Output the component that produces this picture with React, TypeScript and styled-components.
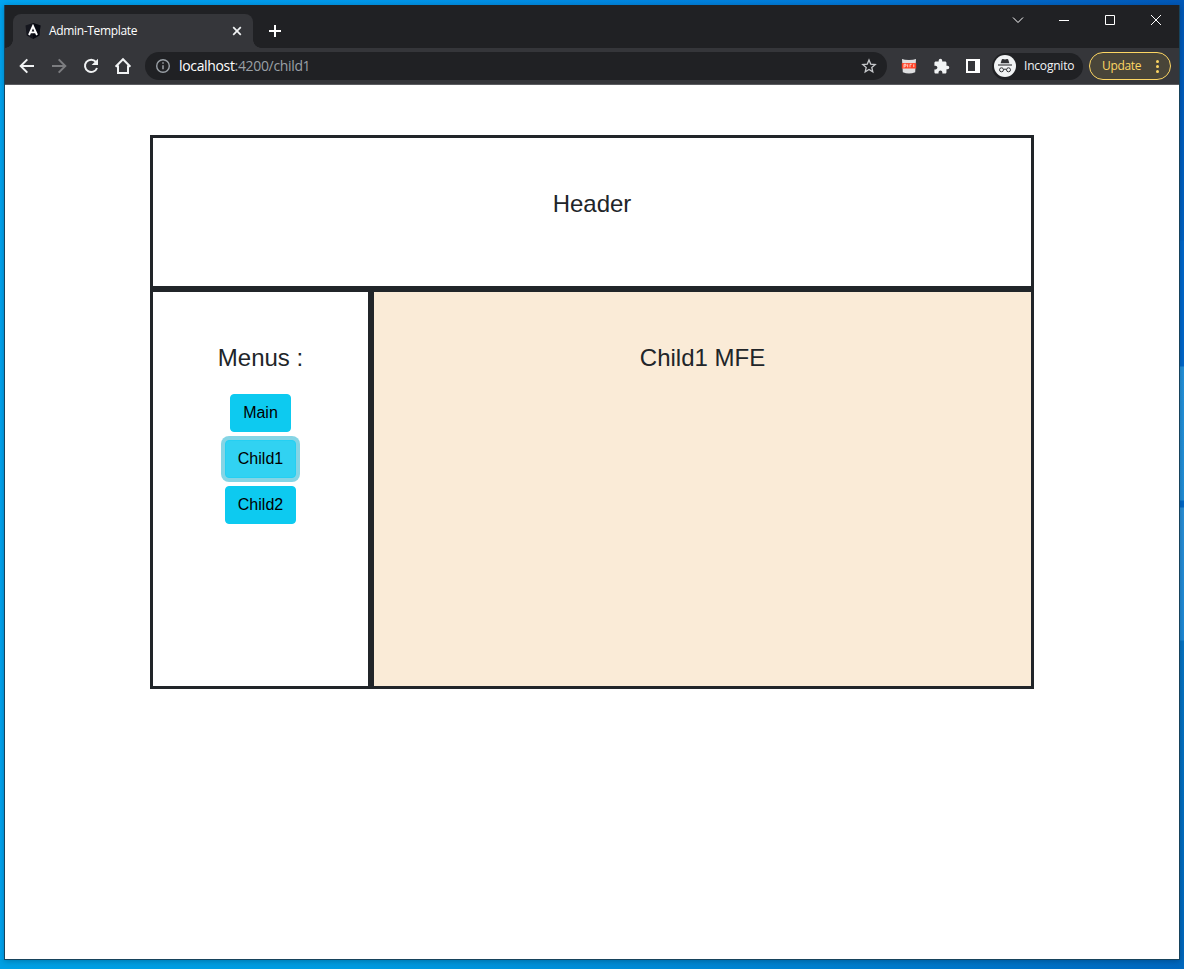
import React from "react";
import styled, { createGlobalStyle } from "styled-components";

const GlobalStyle = createGlobalStyle`
  * { box-sizing: border-box; }
  html, body { margin: 0; padding: 0; }
  body { overflow: hidden; }
`;

const Desktop = styled.div`
  width: 1184px;
  height: 969px;
  padding: 5px 4px 9px;
  display: flex;
  background:
    linear-gradient(180deg, #0058b8 0, #0062c4 240px, #0068cc 241px, #0068cc 366px, #2492dc 367px, #218fd9 500px, #0068c8 501px, #0068c8 507px, #2a90d8 508px, #1d8ad8 640px, #0674c4 641px, #0068be 969px) right / 5px 100% no-repeat,
    linear-gradient(90deg, #00a0e4, #009be0 30%, #0082d0 65%, #0067bf) bottom / 100% 10px no-repeat,
    linear-gradient(90deg, #00a4f0, #0098ea 30%, #0079d8 70%, #0058b8);
`;

const Window = styled.div`
  flex: 1;
  display: flex;
  flex-direction: column;
  border: 1px solid #17435c;
  border-top: 0;
  background: #fff;
  box-shadow: 0 1px 6px rgba(0, 0, 0, 0.25);
  font-family: "Open Sans", "Noto Sans", sans-serif;
`;

const TabStrip = styled.div`
  height: 43px;
  display: flex;
  align-items: flex-end;
  padding-left: 8px;
  background: #202124;
`;

const Tab = styled.div`
  position: relative;
  width: 240px;
  height: 34px;
  padding: 0 10px 0 12px;
  display: flex;
  align-items: center;
  border-radius: 8px 8px 0 0;
  background: #35363a;
  color: #fff;
  &::before, &::after {
    content: "";
    position: absolute;
    bottom: 0;
    width: 8px;
    height: 8px;
  }
  &::before {
    left: -8px;
    background: radial-gradient(circle at 0 0, transparent 7.5px, #35363a 8px);
  }
  &::after {
    right: -8px;
    background: radial-gradient(circle at 100% 0, transparent 7.5px, #35363a 8px);
  }
`;

const TabTitle = styled.span`
  flex: 1;
  margin-left: 8px;
  font-size: 12px;
  line-height: 16px;
  letter-spacing: -0.33px;
`;

const NewTab = styled.div`
  width: 44px;
  height: 34px;
  display: flex;
  align-items: center;
  justify-content: center;
`;

const WindowControls = styled.div`
  align-self: flex-start;
  margin-left: auto;
  display: flex;
`;

const WindowControl = styled.div`
  width: 46px;
  height: 30px;
  display: flex;
  align-items: center;
  justify-content: center;
`;

const Toolbar = styled.div`
  height: 37px;
  padding: 0 8px 0 6px;
  display: flex;
  align-items: center;
  background: #35363a;
  border-bottom: 1px solid #5b5c60;
`;

const ToolButton = styled.div`
  width: 32px;
  height: 28px;
  display: flex;
  align-items: center;
  justify-content: center;
`;

const AddressBar = styled.div`
  width: 742px;
  height: 28px;
  margin: 0 6px;
  padding: 0 10px;
  display: flex;
  align-items: center;
  border-radius: 14px;
  background: #202124;
`;

const Url = styled.span`
  flex: 1;
  margin-left: 8px;
  font-size: 14px;
  line-height: 20px;
  letter-spacing: -0.34px;
  color: #9aa0a6;
`;

const Host = styled.span`
  color: #fff;
`;

const Profile = styled.div`
  width: 91px;
  height: 27px;
  margin-left: 3px;
  padding: 0 0 1px 2px;
  display: flex;
  align-items: center;
  border-radius: 14px;
  background: #202124;
  color: #f1f3f4;
  font-size: 12px;
`;

const ProfileName = styled.span`
  margin-left: 8px;
  letter-spacing: -0.2px;
`;

const UpdateButton = styled.div`
  width: 82px;
  height: 28px;
  margin-left: 6px;
  padding: 0 10px 1px 12px;
  display: flex;
  align-items: center;
  justify-content: space-between;
  border: 1px solid #fdd663;
  border-radius: 14px;
  background: #494539;
  color: #fdd663;
  font-size: 12px;
  letter-spacing: -0.35px;
`;

const Page = styled.main`
  flex: 1;
  padding: 50px 145px 0;
  font-family: "Liberation Sans", Arial, sans-serif;
  color: #212529;
`;

const Panel = styled.section<{ $height: number; $tint?: string }>`
  height: ${(p) => p.$height}px;
  padding: 48px;
  display: flex;
  flex-direction: column;
  align-items: center;
  border: 3px solid #212529;
  background: ${(p) => p.$tint ?? "#fff"};
`;

const Columns = styled.div`
  display: grid;
  grid-template-columns: 1fr 3fr;
`;

const Heading = styled.h1`
  margin: 0;
  font-size: 24px;
  font-weight: 400;
  line-height: 36px;
  white-space: nowrap;
`;

const Menu = styled.nav`
  margin-top: 18px;
  display: flex;
  flex-direction: column;
  align-items: center;
  gap: 8px;
`;

const MenuButton = styled.button<{ $focused?: boolean }>`
  height: 38px;
  padding: 0 12px;
  border: 1px solid ${(p) => (p.$focused ? "#25cff2" : "#0dcaf0")};
  border-radius: 4px;
  background: ${(p) => (p.$focused ? "#31d2f2" : "#0dcaf0")};
  box-shadow: ${(p) => (p.$focused ? "0 0 0 4px rgba(11, 172, 204, 0.5)" : "none")};
  color: #000;
  font: 16px/24px "Liberation Sans", Arial, sans-serif;
`;

const AngularIcon = () => (
  <svg width="16" height="16" viewBox="0 0 16 16">
    <path d="M8 0l7.5 2.6-1.2 10L8 16l-6.3-3.4L.5 2.6z" fill="#15161e" />
    <path d="M8 0l7.5 2.6-1.2 10L8 16z" fill="#080a12" />
    <path d="M4 12L8 3l4 9M5.6 9.4h4.8" fill="none" stroke="#fff" strokeWidth="1.9" />
  </svg>
);

const CloseIcon = () => (
  <svg width="12" height="12" viewBox="0 0 12 12">
    <path d="M2.2 2.2l7.6 7.6M9.8 2.2L2.2 9.8" stroke="#f1f3f4" strokeWidth="1.7" />
  </svg>
);

const BackIcon = ({ color = "#f1f3f4", flip = false }: { color?: string; flip?: boolean }) => (
  <svg width="20" height="20" viewBox="0 0 20 20">
    <path
      transform={flip ? "translate(20 0) scale(-1 1)" : undefined}
      d="M17 10H4.5M10.3 3.4L3.7 10l6.6 6.6"
      fill="none"
      stroke={color}
      strokeWidth="2"
    />
  </svg>
);

const ReloadIcon = () => (
  <svg width="20" height="20" viewBox="0 0 20 20">
    <path d="M14.9 5.8A6.2 6.2 0 1 0 16 12" fill="none" stroke="#f1f3f4" strokeWidth="2" />
    <path d="M17 2.8V9h-6.4z" fill="#f1f3f4" />
  </svg>
);

const HomeIcon = () => (
  <svg width="20" height="20" viewBox="0 0 20 20">
    <path d="M2.6 10.7L10 3.2l7.4 7.5M5 9.5V17h10V9.5" fill="none" stroke="#f1f3f4" strokeWidth="2" />
  </svg>
);

const InfoIcon = () => (
  <svg width="16" height="16" viewBox="0 0 16 16">
    <circle cx="8" cy="8" r="6.3" fill="none" stroke="#9aa0a6" strokeWidth="1.4" />
    <path d="M8 7.2v4M8 4.3v1.5" stroke="#9aa0a6" strokeWidth="1.5" />
  </svg>
);

const StarIcon = () => (
  <svg width="16" height="16" viewBox="0 0 16 16">
    <path
      d="M8 2l1.7 4.1 4.5.4-3.4 2.9 1 4.4L8 11.5l-3.8 2.3 1-4.4-3.4-2.9 4.5-.4z"
      fill="none"
      stroke="#c7c9cc"
      strokeWidth="1.3"
    />
  </svg>
);

const ExtensionIcon = () => (
  <svg width="16" height="16" viewBox="0 0 16 16">
    <path d="M1 1l3 .7 4 .4 4-.4 3-.7-.8 13.2Q8 16.8 1.800 14.200z" fill="#dedfe1" />
    <path d="M.8 5.100h14.400v5.400H.8z" fill="#ff4127" />
    <path d="M3 9.700V6.300h2v1.800H3M6.700 6.300v3M9 9.300V6.300h1.600M12.800 6.300v2.800" fill="none" stroke="#ffd3c7" strokeWidth="1" />
  </svg>
);

const PuzzleIcon = () => (
  <svg width="17" height="17" viewBox="0 0 24 24">
    <path
      fill="#f1f3f4"
      d="M20.5 11H19V7c0-1.1-.9-2-2-2h-4V3.500a2.500 2.500 0 0 0-5 0V5H4c-1.100 0-1.990.9-1.990 2v3.800H3.500c1.490 0 2.700 1.210 2.700 2.700s-1.210 2.700-2.700 2.700H2V20c0 1.100.9 2 2 2h3.800v-1.500c0-1.490 1.210-2.700 2.700-2.700s2.700 1.210 2.700 2.700V22H17c1.100 0 2-.9 2-2v-4h1.500a2.500 2.500 0 0 0 0-5z"
    />
  </svg>
);

const SidePanelIcon = () => (
  <svg width="14" height="14" viewBox="0 0 14 14">
    <path d="M0 0h14v14H0zM2 2v10h7V2z" fill="#fff" fillRule="evenodd" />
  </svg>
);

const IncognitoIcon = () => (
  <svg width="22" height="22" viewBox="0 0 22 22">
    <circle cx="11" cy="11" r="11" fill="#f1f3f4" />
    <path d="M6.600 8.200l1.200-3.700q.3-.8 1.200-.5l2 .6 2-.6q.9-.3 1.200.5L15.400 8.200z" fill="#303134" />
    <path d="M4 10h14" stroke="#303134" strokeWidth="1.100" />
    <circle cx="7.500" cy="14.800" r="2" fill="none" stroke="#303134" strokeWidth="1" />
    <circle cx="14.500" cy="14.800" r="2" fill="none" stroke="#303134" strokeWidth="1" />
    <path d="M9.500 14.500q1.500-.8 3 0" fill="none" stroke="#303134" strokeWidth="1" />
  </svg>
);

const DotsIcon = () => (
  <svg width="5" height="14" viewBox="0 0 5 14">
    <circle cx="2.500" cy="2.500" r="1.500" fill="#fdd663" />
    <circle cx="2.500" cy="7.500" r="1.500" fill="#fdd663" />
    <circle cx="2.500" cy="12.500" r="1.500" fill="#fdd663" />
  </svg>
);

const ControlIcon = ({ d }: { d: string }) => (
  <svg width="12" height="12" viewBox="0 0 12 12">
    <path d={d} fill="none" stroke="#fff" strokeWidth="1" />
  </svg>
);

const controls = [
  "M1 3.500l5 5 5-5",
  "M1 6.500h10",
  "M1.500 1.500h9v9h-9z",
  "M1 1l10 10M11 1L1 11",
];

const menuItems = ["Main", "Child1", "Child2"];

export default function App() {
  return (
    <>
      <GlobalStyle />
      <Desktop>
        <Window>
          <TabStrip>
            <Tab>
              <AngularIcon />
              <TabTitle>Admin-Template</TabTitle>
              <CloseIcon />
            </Tab>
            <NewTab>
              <svg width="14" height="14" viewBox="0 0 14 14">
                <path d="M7 1v12M1 7h12" stroke="#fff" strokeWidth="2" />
              </svg>
            </NewTab>
            <WindowControls>
              {controls.map((d) => (
                <WindowControl key={d}>
                  <ControlIcon d={d} />
                </WindowControl>
              ))}
            </WindowControls>
          </TabStrip>
          <Toolbar>
            <ToolButton><BackIcon /></ToolButton>
            <ToolButton><BackIcon color="#7c7d80" flip /></ToolButton>
            <ToolButton><ReloadIcon /></ToolButton>
            <ToolButton><HomeIcon /></ToolButton>
            <AddressBar>
              <InfoIcon />
              <Url><Host>localhost</Host>:4200/child1</Url>
              <StarIcon />
            </AddressBar>
            <ToolButton><ExtensionIcon /></ToolButton>
            <ToolButton><PuzzleIcon /></ToolButton>
            <ToolButton><SidePanelIcon /></ToolButton>
            <Profile>
              <IncognitoIcon />
              <ProfileName>Incognito</ProfileName>
            </Profile>
            <UpdateButton>
              Update
              <DotsIcon />
            </UpdateButton>
          </Toolbar>
          <Page>
            <Panel as="header" $height={154}>
              <Heading>Header</Heading>
            </Panel>
            <Columns>
              <Panel $height={400}>
                <Heading>Menus :</Heading>
                <Menu>
                  {menuItems.map((item) => (
                    <MenuButton key={item} $focused={item === "Child1"}>{item}</MenuButton>
                  ))}
                </Menu>
              </Panel>
              <Panel $height={400} $tint="#faebd7">
                <Heading>Child1 MFE</Heading>
              </Panel>
            </Columns>
          </Page>
        </Window>
      </Desktop>
    </>
  );
}
